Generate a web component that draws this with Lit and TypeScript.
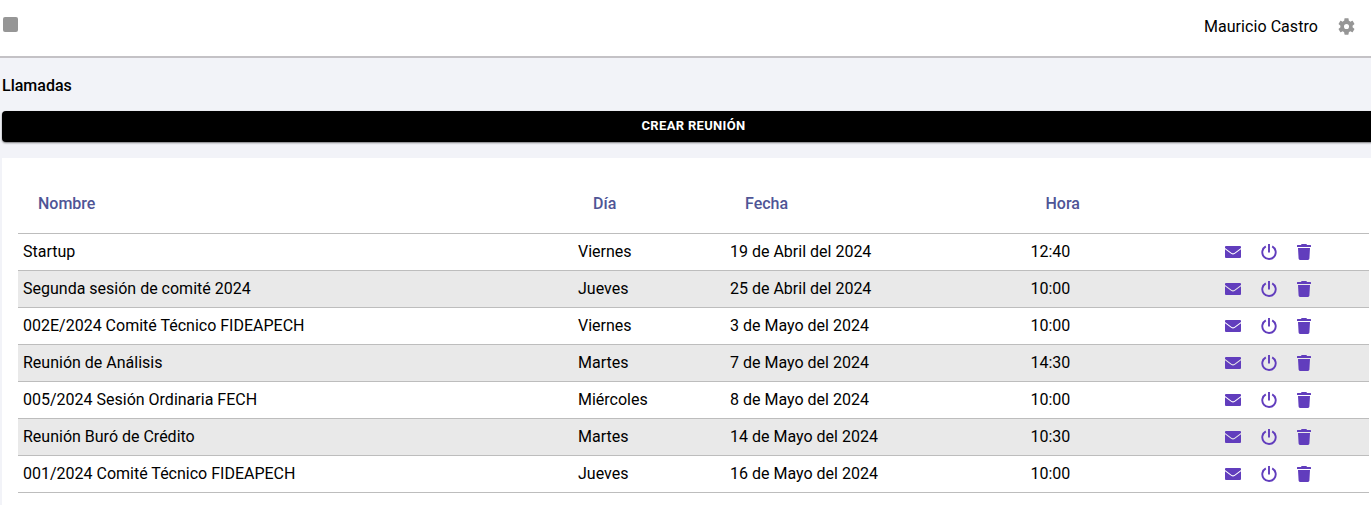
import { LitElement, html, css } from "lit";
import { customElement } from "lit/decorators.js";

interface Call {
  name: string;
  day: string;
  date: string;
  time: string;
}

const CALLS: Call[] = [
  { name: "Startup", day: "Viernes", date: "19 de Abril del 2024", time: "12:40" },
  { name: "Segunda sesión de comité 2024", day: "Jueves", date: "25 de Abril del 2024", time: "10:00" },
  { name: "002E/2024 Comité Técnico FIDEAPECH", day: "Viernes", date: "3 de Mayo del 2024", time: "10:00" },
  { name: "Reunión de Análisis", day: "Martes", date: "7 de Mayo del 2024", time: "14:30" },
  { name: "005/2024 Sesión Ordinaria FECH", day: "Miércoles", date: "8 de Mayo del 2024", time: "10:00" },
  { name: "Reunión Buró de Crédito", day: "Martes", date: "14 de Mayo del 2024", time: "10:30" },
  { name: "001/2024 Comité Técnico FIDEAPECH", day: "Jueves", date: "16 de Mayo del 2024", time: "10:00" },
];

const gear = html`<svg class="gear" viewBox="2 2 20 20"><path d="M19.14 12.94c.04-.3.06-.61.06-.94 0-.32-.02-.64-.07-.94l2.03-1.58c.18-.14.23-.41.12-.61l-1.92-3.32c-.12-.22-.37-.29-.59-.22l-2.39.96c-.5-.38-1.03-.7-1.62-.94l-.36-2.54c-.04-.24-.24-.41-.48-.41h-3.84c-.24 0-.43.17-.47.41l-.36 2.54c-.59.24-1.13.57-1.62.94l-2.39-.96c-.22-.08-.47 0-.59.22L2.74 8.87c-.12.21-.08.47.12.61l2.03 1.58c-.05.3-.09.63-.09.94s.02.64.07.94l-2.03 1.58c-.18.14-.23.41-.12.61l1.92 3.32c.12.22.37.29.59.22l2.39-.96c.5.38 1.03.7 1.62.94l.36 2.54c.05.24.24.41.48.41h3.84c.24 0 .44-.17.47-.41l.36-2.54c.59-.24 1.13-.56 1.62-.94l2.39.96c.22.08.47 0 .59-.22l1.92-3.32c.12-.22.07-.47-.12-.61l-2.01-1.58zM12 15a3 3 0 1 1 0-6 3 3 0 0 1 0 6z"/></svg>`;

const mail = html`<svg width="16" height="16" viewBox="0 0 16 16"><path d="M1 2H15Q16 2 16 3V4L9.300 8.900Q8 9.700 6.700 8.900L0 4V3Q0 2 1 2ZM0 5.300L6.100 9.800Q8 11 9.900 9.800L16 5.300V13Q16 14 15 14H1Q0 14 0 13Z"/></svg>`;

const power = html`<svg class="power" width="16" height="16" viewBox="0 0 16 16"><path d="M4.800 2.400A6.700 6.700 0 1 0 11.200 2.400M8 0V8.500"/></svg>`;

const trash = html`<svg width="14" height="16" viewBox="0 0 14 16"><path d="M0.500 1H4L4.600 0H9.400L10 1H13.500Q14 1 14 1.500V3H0V1.500Q0 1 0.500 1ZM1 4H13L12.400 14.600Q12.300 16 11 16H3Q1.700 16 1.600 14.600Z"/></svg>`;

@customElement("app-root")
export class AppRoot extends LitElement {
  static styles = css`
    :host {
      display: flex;
      flex-direction: column;
      height: 505px;
      overflow: hidden;
      background: #f2f3f8;
      font: 16px/19px Roboto, sans-serif;
      color: #000;
    }
    * { box-sizing: border-box; }
    svg { display: block; fill: currentColor; }
    .bar {
      display: flex;
      align-items: center;
      flex: none;
      height: 58px;
      padding: 0 16px 4px 3px;
      background: #fff;
      border-bottom: 2px solid #c4c2c6;
    }
    .toggle {
      width: 15px;
      height: 15px;
      margin-bottom: 3px;
      border-radius: 2px;
      background: #969696;
    }
    .user { margin-left: auto; letter-spacing: 0.06px; }
    .gear { width: 17px; height: 17px; margin-left: 20px; color: #969696; }
    .title {
      margin: 18px 0 16px 2px;
      font-size: 16px;
      font-weight: 500;
      line-height: 19px;
    }
    .create {
      flex: none;
      width: 1383px;
      height: 31px;
      margin-left: 2px;
      padding: 0 0 1px;
      border: 0;
      border-radius: 4px;
      background: #000;
      color: #fff;
      font: 700 13px/30px Roboto, sans-serif;
      letter-spacing: 0.32px;
      text-align: center;
      text-transform: uppercase;
      box-shadow: 0 1px 2px rgba(0, 0, 0, 0.5);
    }
    .card {
      flex: 1;
      margin: 16px 0 0 2px;
      padding: 16px 2px 0 16px;
      background: #fff;
    }
    .row {
      display: grid;
      grid-template-columns: 555px 152px 300.500px 1fr 162px;
      align-items: center;
      height: 37px;
      padding: 0 0 2px 5px;
      border-bottom: 1px solid #bdbdbd;
    }
    .row:nth-child(odd) { background: #e9e9e9; }
    .row.head {
      height: 60px;
      padding: 0 0 0 20px;
      background: none;
      color: #4f5596;
      font-weight: 500;
    }
    .actions {
      display: flex;
      align-items: center;
      color: #613dbd;
      padding: 1px 0 0 18px;
    }
    .actions svg + svg { margin-left: 20px; }
    .power { fill: none; stroke: currentColor; stroke-width: 1.900; }
  `;

  render() {
    return html`
      <header class="bar">
        <span class="toggle"></span>
        <span class="user">Mauricio Castro</span>
        ${gear}
      </header>
      <h1 class="title">Llamadas</h1>
      <button class="create">Crear reunión</button>
      <section class="card">
        <div class="row head">
          <span>Nombre</span><span>Día</span><span>Fecha</span><span>Hora</span>
        </div>
        ${CALLS.map(
          (c) => html`<div class="row">
            <span>${c.name}</span><span>${c.day}</span><span>${c.date}</span><span>${c.time}</span>
            <span class="actions">${mail}${power}${trash}</span>
          </div>`
        )}
      </section>
    `;
  }
}
